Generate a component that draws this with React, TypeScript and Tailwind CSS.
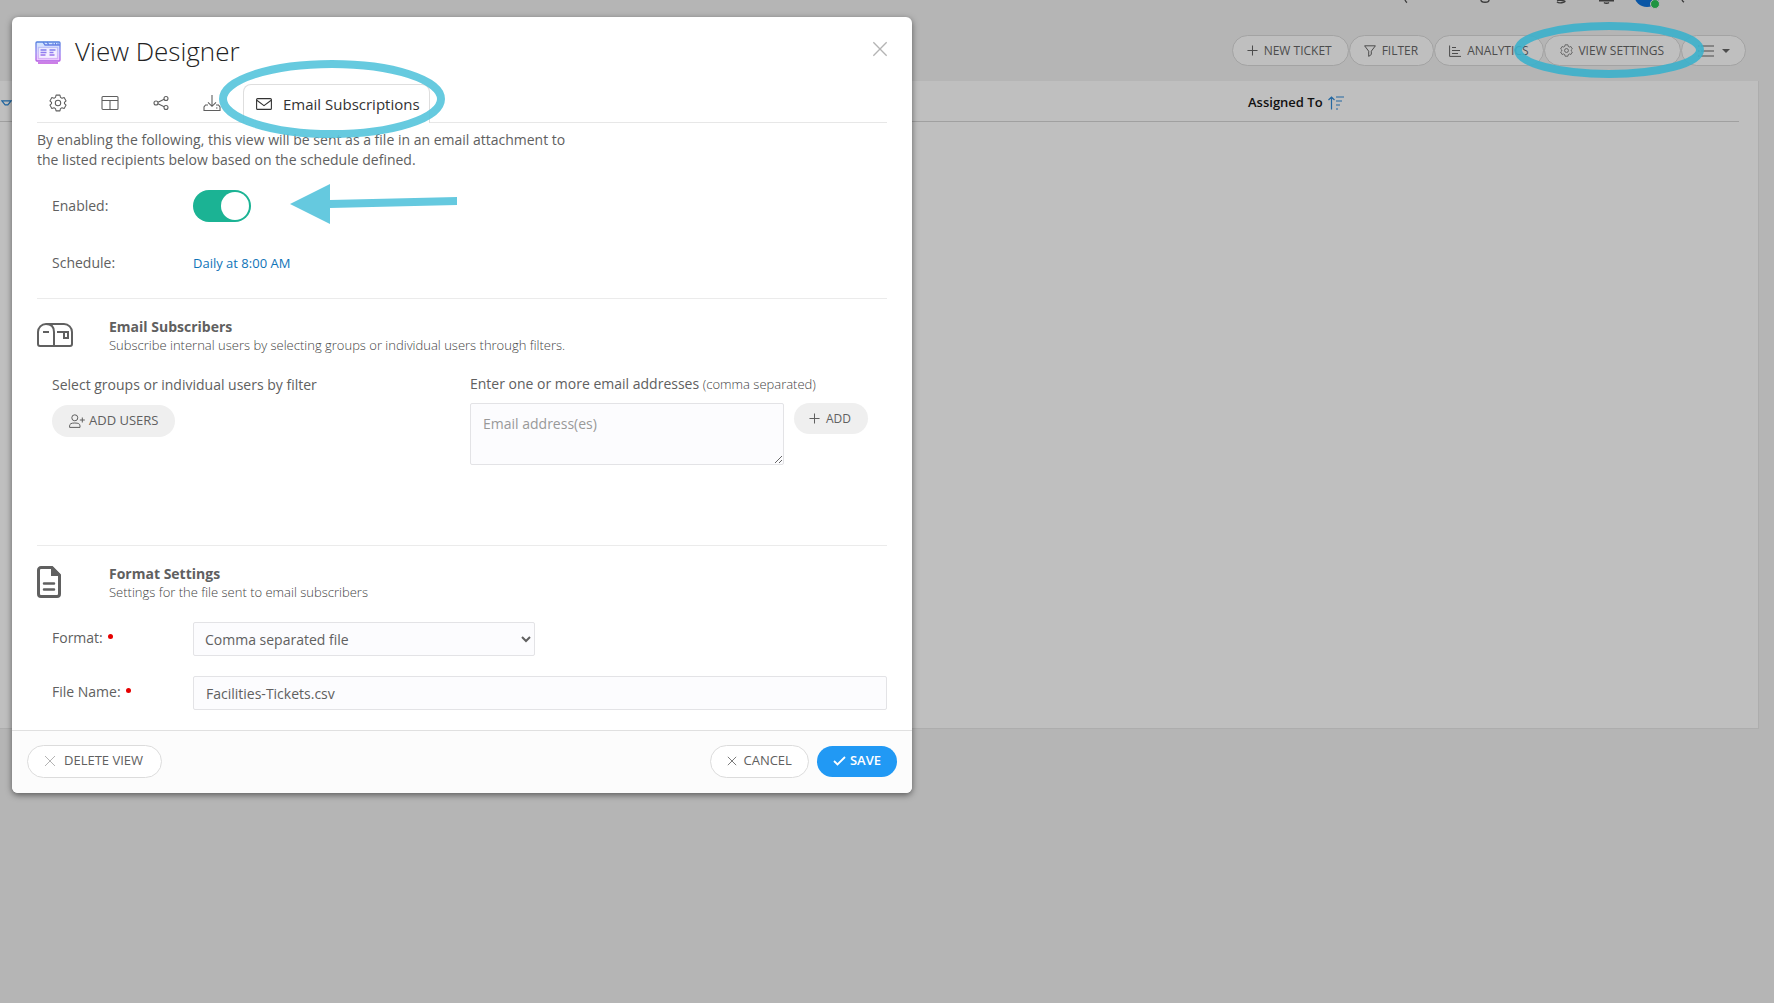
import React from "react";

const GEAR = "M9.4 1.5h5.2l.7 3 2 1.1 2.9-.9 2.6 4.5-2.2 2.1v1.4l2.2 2.1-2.6 4.5-2.9-.9-2 1.1-.7 3H9.4l-.7-3-2-1.1-2.9.9-2.6-4.5 2.2-2.1v-1.4L1.2 9.200l2.600-4.500 2.900.9 2-1.100z";

function Gear({ className = "" }: { className?: string }) {
  return (
    <svg viewBox="0 0 24 24" className={className} fill="none" stroke="currentColor" strokeWidth="1.4" strokeLinejoin="round">
      <path d={GEAR} />
      <circle cx="12" cy="12" r="3.600" />
    </svg>
  );
}

function Cross({ className = "", w = 1 }: { className?: string; w?: number }) {
  return (
    <svg viewBox="0 0 12 12" className={className} fill="none" stroke="currentColor" strokeWidth={w}>
      <path d="M1 1l10 10M11 1L1 11" />
    </svg>
  );
}

function Plus() {
  return (
    <svg viewBox="0 0 12 12" className="size-[11px]" fill="none" stroke="currentColor" strokeWidth="1.1">
      <path d="M6 0.500v11M0.500 6h11" />
    </svg>
  );
}

const toolBtn = "flex h-[31px] items-center rounded-full border border-[#a3a3a3] bg-[#bfbfbf] text-[12px] text-[#4c4c4c]";
const tabIcon = "size-[18px]";

function TopStrip() {
  return (
    <div className="relative h-[35px] overflow-hidden text-[#3c3c3c]">
      <svg viewBox="0 0 310 12" className="absolute top-0 right-[74px] h-3 w-[310px]" fill="none" stroke="currentColor" strokeWidth="1.400">
        <path d="M15 0c.5 1.200 1.200 2 2 2.600M91 0c0 1.500 1.500 2.200 4 2.200s4-.7 4-2.200M167 0c1.500.5 8 .3 8 1.300s-6 2.700-8 .5M209 .7h15M214 2.500c1 1 4 1 5 0M292 0c.5 1 1 1.600 2 2.200" />
        <circle cx="257" cy="-6" r="13" fill="#0a56a5" stroke="none" />
        <circle cx="265" cy="4" r="4.500" fill="#1e9441" stroke="#b5b5b5" strokeWidth="1" />
      </svg>
    </div>
  );
}

function Toolbar() {
  return (
    <div className="relative flex justify-end pr-7">
      <button className={`${toolBtn} gap-[6px] pr-4 pl-[14px]`}><Plus />NEW TICKET</button>
      <button className={`${toolBtn} gap-[6px] pr-[15px] pl-[14px]`}>
        <svg viewBox="0 0 12 12" className="size-3" fill="none" stroke="currentColor" strokeLinejoin="round"><path d="M.6.8h10.800L7.300 6.200v3.300L4.700 11.400V6.200z" /></svg>
        FILTER
      </button>
      <button className={`${toolBtn} gap-[6px] pr-[15px] pl-[14px]`}>
        <svg viewBox="0 0 12 12" className="size-3" fill="none" stroke="currentColor"><path d="M.6.5v10.900H12M3 2.500h4M3 5.500h8M3 8.500h6" /></svg>
        ANALYTICS
      </button>
      <button className={`${toolBtn} gap-[5px] pr-4 pl-[15px]`}><Gear className="size-[13px]" />VIEW SETTINGS</button>
      <button aria-label="List options" className={`${toolBtn} gap-2 pr-[15px] pl-4`}>
        <svg viewBox="0 0 16 12" className="h-3 w-4" fill="none" stroke="currentColor" strokeWidth="1.200"><path d="M3 1h13M3 6h13M3 11h13M0 1h1.500M0 6h1.500M0 11h1.500" /></svg>
        <svg viewBox="0 0 8 4" className="h-1 w-2" fill="currentColor"><path d="M0 0h8L4 4z" /></svg>
      </button>
      <svg viewBox="0 0 190 56" className="pointer-events-none absolute -top-[13px] right-[70px] h-14 w-[190px]" fill="none" stroke="#3bb0cb" strokeOpacity=".9" strokeWidth="8"><ellipse cx="95" cy="28" rx="91" ry="24" /></svg>
    </div>
  );
}

function ListPage() {
  return (
    <div className="min-h-screen bg-[#b5b5b5]">
      <TopStrip />
      <Toolbar />
      <main className="mt-[15px] mr-[15px] h-[648px] border-r border-b border-[#adadad] bg-[#bfbfbf] pr-[19px]">
        <table className="w-full text-left">
          <thead>
            <tr className="h-10 border-b border-[#a0a0a0]">
              <th className="w-[1248px] pt-1" scope="col" aria-label="Sort">
                <svg viewBox="0 0 12 6" className="ml-px h-[6px] w-[11px]" fill="none" stroke="#1c64a0" strokeWidth="1.200"><path d="M1 .7h10L7.500 5h-3z" /></svg>
              </th>
              <th scope="col" className="text-[13px] font-semibold text-[#111]">
                <span className="flex items-center gap-[5px] pt-1">
                  Assigned To
                  <svg viewBox="0 0 16 14" className="h-[14px] w-4" fill="none" stroke="#2468a2" strokeWidth="1.200"><path d="M3.500 13.500V1M.5 4l3-3 3 3M8 1h8M8 5h6M8 9h4M8 13h2" /></svg>
                </span>
              </th>
            </tr>
          </thead>
        </table>
      </main>
    </div>
  );
}

function Tabs() {
  return (
    <nav className="relative mx-[25px] flex h-[39px] items-end border-b border-[#e7e7e7] text-[#5f5f5f]">
      <div className="flex h-full items-center pl-3">
        <button aria-label="Settings" className="mr-[34px]"><Gear className={tabIcon} /></button>
        <button aria-label="Columns" className="mr-[33px]">
          <svg viewBox="0 0 18 18" className={tabIcon} fill="none" stroke="currentColor" strokeWidth="1.100"><rect x="1" y="2.500" width="16" height="13" rx="1" /><path d="M1 6.500h16M9 6.500v9" /></svg>
        </button>
        <button aria-label="Share" className="mr-[33px]">
          <svg viewBox="0 0 18 18" className={tabIcon} fill="none" stroke="currentColor" strokeWidth="1.100"><circle cx="4" cy="9" r="2" /><circle cx="14" cy="4.500" r="2" /><circle cx="14" cy="13.500" r="2" /><path d="M6 8.200l6.200-2.900M6 9.800l6.200 2.900" /></svg>
        </button>
        <button aria-label="Export">
          <svg viewBox="0 0 18 18" className={tabIcon} fill="none" stroke="currentColor" strokeWidth="1.100"><path d="M9 1v11M5 8.300l4 4 4-4M5 11H2.500L1 13v3.500h16V13l-1.500-2H13M13 14h1.500" /></svg>
        </button>
      </div>
      <button className="-mb-px ml-[22px] flex h-[39px] items-center gap-[11px] rounded-t-lg border border-b-0 border-[#dedede] bg-white pr-[9px] pl-3 text-[15px] text-[#333]">
        <svg viewBox="0 0 16 12" className="h-3 w-4" fill="none" stroke="currentColor" strokeWidth="1.100" strokeLinejoin="round"><rect x=".6" y=".6" width="14.800" height="10.800" rx="1" /><path d="M.8 2.200L8 7.600l7.200-5.400" /></svg>
        Email Subscriptions
      </button>
      <svg viewBox="0 0 226 78" className="pointer-events-none absolute top-[-24px] left-[182px] z-10 h-[78px] w-[226px]" fill="none" stroke="#55c4dc" strokeOpacity=".9" strokeWidth="8"><ellipse cx="113" cy="39" rx="109" ry="35" /></svg>
    </nav>
  );
}

function SectionHead({ icon, title, text }: { icon: React.ReactNode; title: string; text: string }) {
  return (
    <div className="flex">
      <div className="w-[72px]">{icon}</div>
      <div>
        <h2 className="text-[14px] leading-[18px] font-bold">{title}</h2>
        <p className="text-[13px] leading-[18px] font-light text-[#444]">{text}</p>
      </div>
    </div>
  );
}

const field = "h-[34px] rounded-xs border border-[#e3e3e6] bg-[#fcfcfe] text-[14px]";

function Designer() {
  return (
    <div role="dialog" aria-label="View Designer" className="absolute top-[17px] left-3 w-[900px] overflow-hidden rounded-[6px] bg-white text-[14px] text-[#606060] shadow-[0_2px_6px_rgba(0,0,0,0.5)]">
      <header className="flex h-[67px] items-center pr-6 pl-[23px]">
        <svg viewBox="0 0 26 23" className="mt-1 h-[23px] w-[26px]" fill="none" stroke="url(#vd)" strokeWidth="1.300">
          <defs>
            <linearGradient id="vd" gradientUnits="userSpaceOnUse" x1="0" y1="0" x2="0" y2="23"><stop stopColor="#4f7fdd" /><stop offset=".5" stopColor="#8f7df0" /><stop offset="1" stopColor="#c050dd" /></linearGradient>
            <linearGradient id="vf" x1="0" y1="0" x2="0" y2="1"><stop stopColor="#cfe6ff" /><stop offset="1" stopColor="#efc9ff" /></linearGradient>
          </defs>
          <rect x="1" y="1" width="24" height="19" rx="1" fill="url(#vf)" />
          <path d="M8 1l2 3h15M12 1l2 3M17.500 2.500h1M20 2.500h1M22.500 2.500h1M3 22h20" />
          <rect x="3.500" y="6.500" width="19" height="11" fill="#f4efff" strokeOpacity=".35" />
          <path d="M5.500 9h6M5.500 11.500h6M5.500 14h5M14.500 9h6M14.500 11.500h4M14.500 14h5" />
        </svg>
        <h1 className="ml-[14px] text-[26px] leading-9 font-light text-[#222]">View Designer</h1>
        <button aria-label="Close" className="mb-1 ml-auto text-[#b4b4b4]"><Cross className="size-4" w={1} /></button>
      </header>
      <Tabs />
      <div className="px-[25px]">
        <p className="w-[530px] pt-[7px] leading-5">By enabling the following, this view will be sent as a file in an email attachment to the listed recipients below based on the schedule defined.</p>
        <div className="mt-5 flex h-8 items-center pl-[15px]">
          <label htmlFor="enabled" className="w-[141px] pb-[2px]">Enabled:</label>
          <span className="relative flex h-8 w-[58px]">
            <input id="enabled" type="checkbox" defaultChecked className="h-8 w-[58px] appearance-none rounded-full bg-[#1bb394]" />
            <span className="pointer-events-none absolute top-[2px] right-[2px] size-7 rounded-full bg-white" />
          </span>
          <svg viewBox="0 0 168 40" className="mb-1 ml-[39px] h-10 w-[168px]" fill="#65c9df"><path d="M0 20L40 0v16l127-3v8L40 24v16z" /></svg>
        </div>
        <div className="mt-[30px] flex h-5 items-baseline pl-[15px]">
          <span className="w-[141px]">Schedule:</span>
          <a href="#schedule" className="text-[13px] text-[#0f74b8]">Daily at 8:00 AM</a>
        </div>
        <section className="mt-[26px] h-[247px] border-t border-[#ebebeb] pt-[19px]">
          <SectionHead
            title="Email Subscribers"
            text="Subscribe internal users by selecting groups or individual users through filters."
            icon={
              <svg viewBox="0 0 36 24" className="mt-[5px] h-6 w-9" fill="none" stroke="currentColor" strokeWidth="2"><path d="M9 1h18a8 8 0 0 1 8 8v12a2 2 0 0 1-2 2H3a2 2 0 0 1-2-2V9a8 8 0 0 1 8-8c5 0 8 3 8 8v14M6 9h6M20 9h11v6h-4V9" /></svg>
            }
          />
          <div className="mt-[20px] flex pl-[15px]">
            <div className="w-[418px]">
              <h3 className="pt-px leading-5">Select groups or individual users by filter</h3>
              <button className="mt-[10px] flex h-8 items-center gap-1 rounded-full bg-[#efefef] pr-[17px] pl-[17px] text-[13px]">
                <svg viewBox="0 0 16 14" className="h-[14px] w-4" fill="none" stroke="currentColor"><circle cx="5.800" cy="3.800" r="3" /><path d="M.6 13.400v-1.500C.6 9.800 2.200 9 5.800 9s5.200.8 5.200 2.900v1.500zM13.300 3.500v5M10.800 6h5" /></svg>
                ADD USERS
              </button>
            </div>
            <div className="flex-1">
              <label htmlFor="emails" className="block leading-5">Enter one or more email addresses <span className="text-[13px] font-light text-[#444]">(comma separated)</span></label>
              <div className="mt-[9px] flex items-start gap-[10px]">
                <textarea id="emails" placeholder="Email address(es)" className="h-[62px] w-[314px] rounded-xs border border-[#e3e3e6] bg-[#fcfcfe] px-3 py-[10px] text-[14px] leading-5 placeholder:text-[#999]" />
                <button className="flex h-[31px] items-center gap-[6px] rounded-full bg-[#efefef] pr-[17px] pl-[15px] text-[12px]"><Plus />ADD</button>
              </div>
            </div>
          </div>
        </section>
        <section className="border-t border-[#ebebeb] pt-[19px] pb-5">
          <SectionHead
            title="Format Settings"
            text="Settings for the file sent to email subscribers"
            icon={
              <svg viewBox="0 0 24 32" className="mt-px h-8 w-6" fill="none" stroke="currentColor" strokeWidth="3"><path d="M4 1.500h11L22.500 9v19a2.500 2.500 0 0 1-2.500 2.500H4A2.500 2.500 0 0 1 1.500 28V4A2.500 2.500 0 0 1 4 1.500z" /><path d="M14 1h2l7 7v2h-9z" fill="currentColor" stroke="none" /><path d="M7 17.500h10M7 23.500h10" strokeLinecap="round" strokeWidth="2.500" /></svg>
            }
          />
          <div className="mt-[21px] flex pl-[15px]">
            <label htmlFor="format" className="flex w-[141px] pt-[6px] leading-5">Format:<span className="mt-[6px] ml-[5px] size-[5px] rounded-full bg-[#e60000]" /></label>
            <select id="format" className={`${field} w-[342px] px-[7px]`} defaultValue="csv"><option value="csv">Comma separated file</option></select>
          </div>
          <div className="mt-5 flex pl-[15px]">
            <label htmlFor="file" className="flex w-[141px] pt-[6px] leading-5">File Name:<span className="mt-[6px] ml-[5px] size-[5px] rounded-full bg-[#e60000]" /></label>
            <input id="file" defaultValue="Facilities-Tickets.csv" className={`${field} flex-1 px-3`} />
          </div>
        </section>
      </div>
      <footer className="flex h-[63px] items-center border-t border-[#e0e0e0] bg-[#fcfcfc] px-[15px] pb-[2px] text-[13px]">
        <button className="flex h-[33px] items-center gap-2 rounded-full border border-[#dcdcdc] bg-white pr-[18px] pl-4"><Cross className="size-3 text-[#b4b4b4]" />DELETE VIEW</button>
        <button className="ml-auto flex h-[33px] items-center gap-[6px] rounded-full border border-[#dcdcdc] bg-white px-4"><Cross className="size-[10px]" />CANCEL</button>
        <button className="ml-2 flex h-[31px] items-center gap-1 rounded-full bg-[#2199f4] px-4 font-semibold text-white">
          <svg viewBox="0 0 13 10" className="h-[10px] w-[13px]" fill="none" stroke="currentColor" strokeWidth="1.800"><path d="M1 5l3.500 3.500L12 1" /></svg>SAVE
        </button>
      </footer>
    </div>
  );
}

export default function App() {
  return (
    <div className="relative min-h-screen font-['Open_Sans',sans-serif]">
      <ListPage />
      <Designer />
    </div>
  );
}
